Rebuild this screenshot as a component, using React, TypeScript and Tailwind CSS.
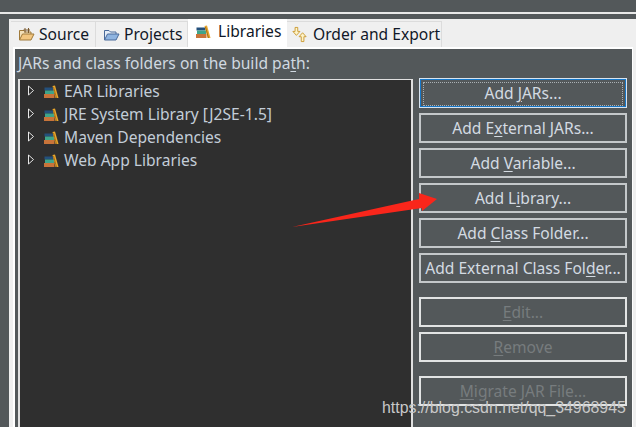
import React from 'react';

const font = { fontFamily: '"Noto Sans", "Open Sans", sans-serif' };

function U({ children }: { children: React.ReactNode }) {
  return <span className="underline underline-offset-2">{children}</span>;
}

function LibIcon() {
  return (
    <svg width="15" height="14" viewBox="0 0 15 14" className="shrink-0">
      <rect x="0.5" y="2.5" width="9" height="3" fill="#24507c" />
      <rect x="1" y="5.5" width="9" height="3.5" fill="#3fa58a" />
      <rect x="0" y="9" width="10.5" height="4" fill="#c8743a" />
      <path d="M8.5 1 L11 0.5 L14.5 13 L11.5 13 Z" fill="#e8a62c" />
      <path d="M9.5 2 L12.5 13" stroke="#8a5a10" strokeWidth="0.7" />
    </svg>
  );
}

function FolderIcon({ blue }: { blue?: boolean }) {
  const back = blue ? '#e4ecf6' : '#f3e0b8';
  const front = blue ? '#8fb4e0' : '#f2c680';
  const line = blue ? '#4a6a9a' : '#a07a3a';
  return (
    <svg width="17" height="15" viewBox="0 0 17 15" className="shrink-0">
      <path d="M1.5 13 V3.5 H6 L7.5 5 H13 V7" fill={back} stroke={line} />
      <path d="M1.5 13 L4.5 7 H16 L13 13 Z" fill={front} stroke={line} strokeLinejoin="round" />
      {!blue && <path d="M7 1 V6 M10.5 1 V6 M5.5 3 H12" stroke="#7a5a30" strokeWidth="1" />}
    </svg>
  );
}

function OrderIcon() {
  return (
    <svg width="15" height="17" viewBox="0 0 17 19" className="ml-[-2px] mr-[2px] shrink-0">
      <path d="M3.5 1.5 H6.5 V6 H9 L5 10.5 L1 6 H3.5 Z" fill="#fdf3c8" stroke="#c8952a" />
      <path d="M10.5 17.5 H13.5 V12 H16 L12 7.5 L8 12 H10.5 Z" fill="#fdf3c8" stroke="#c8952a" />
    </svg>
  );
}

function Tab({ icon, label, width, active }: { icon: React.ReactNode; label: string; width: string; active?: boolean }) {
  return (
    <div
      className={`flex items-center text-[15.6px] text-[#101828] ${width} ${
        active
          ? 'h-[28px] gap-[7px] bg-white pb-[2px] pl-[8px]'
          : 'h-[26px] gap-[4px] border-t border-r border-[#dcdcdc] bg-[#f0f0f0] pl-[7px]'
      }`}
    >
      {icon}
      <span>{label}</span>
    </div>
  );
}

function Row({ label }: { label: string }) {
  return (
    <div className="flex h-[23px] items-center">
      <svg width="8" height="11" viewBox="0 0 8 11" className="ml-[7px] mr-[9px] mb-[3px] shrink-0">
        <path d="M1.5 1 L6.5 5.5 L1.5 10 Z" fill="#2b2b2b" stroke="#e8e8e8" />
      </svg>
      <LibIcon />
      <span className="ml-[5px] text-[15.6px] text-[#c3cdd8]">{label}</span>
    </div>
  );
}

function Btn({ children, focus, off }: { children: React.ReactNode; focus?: boolean; off?: boolean }) {
  return (
    <div
      className={`flex h-[30px] items-center justify-center border-2 pt-[1px] text-[15.6px] whitespace-nowrap ${
        focus ? 'border-[#d8e4f0] outline outline-1 outline-offset-[-2px] outline-[#1677c8]' : 'border-[#c4c8ca]'
      } ${off ? 'border-[#e2e4e4] text-[#777c7e]' : 'text-[#d4dbe2]'}`}
    >
      {focus ? (
        <span className="flex h-[24px] w-[200px] items-center justify-center border border-dotted border-[#aab0b4]">
          {children}
        </span>
      ) : (
        children
      )}
    </div>
  );
}

export default function App() {
  return (
    <div className="relative h-[427px] w-[636px] overflow-hidden bg-[#53585a]" style={font}>
      <div className="mt-[12px] h-[2px] bg-[#e8e8e8]" />
      <div className="ml-[9px] mt-[5px] h-[408px] bg-[#efefef] pl-[2px]">
        <div className="flex h-[28px] items-end">
          <Tab icon={<FolderIcon />} label="Source" width="w-[85px]" />
          <Tab icon={<FolderIcon blue />} label="Projects" width="w-[92px]" />
          <Tab icon={<LibIcon />} label="Libraries" width="w-[99px]" active />
          <Tab icon={<OrderIcon />} label="Order and Export" width="w-[155px]" />
        </div>
        <div className="ml-[2px] mr-[3px] h-[380px] border-l-2 border-t-2 border-r border-white bg-[#53585a] pl-[3px]">
          <div className="flex h-[29px] items-center pt-[1px] text-[15.6px] text-[#d0d8e0]">
            <span>
              JARs and class folders on the build pa<U>t</U>h:
            </span>
          </div>
          <div className="flex">
            <div className="mt-[1px] h-[360px] w-[395px] border-l-2 border-t border-r-2 border-[#e0e0e0] bg-[#2f2f2f]">
              <Row label="EAR Libraries" />
              <Row label="JRE System Library [J2SE-1.5]" />
              <Row label="Maven Dependencies" />
              <Row label="Web App Libraries" />
            </div>
            <div className="ml-[6px] flex w-[208px] flex-col">
              <div className="flex flex-col gap-[5px]">
                <Btn focus>
                  <span>
                    Add <U>J</U>ARs...
                  </span>
                </Btn>
                <Btn>
                  <span>
                    Add E<U>x</U>ternal JARs...
                  </span>
                </Btn>
                <Btn>
                  <span>
                    Add <U>V</U>ariable...
                  </span>
                </Btn>
                <Btn>
                  <span>
                    Add L<U>i</U>brary...
                  </span>
                </Btn>
                <Btn>
                  <span>
                    Add <U>C</U>lass Folder...
                  </span>
                </Btn>
                <Btn>
                  <span>
                    Add External Class Fol<U>d</U>er...
                  </span>
                </Btn>
              </div>
              <div className="mt-[14px] flex flex-col gap-[5px]">
                <Btn off>
                  <span>
                    <U>E</U>dit...
                  </span>
                </Btn>
                <Btn off>
                  <span>
                    <U>R</U>emove
                  </span>
                </Btn>
              </div>
              <div className="mt-[14px]">
                <Btn off>
                  <span>
                    <U>M</U>igrate JAR File...
                  </span>
                </Btn>
              </div>
            </div>
          </div>
        </div>
      </div>

      {/* red arrow drawn over the shot */}
      <svg width="150" height="50" viewBox="0 0 150 50" className="absolute left-[290px] top-[190px]">
        <path d="M2 37 L129 9 L129 3 L147 9 L132 21 L132 18 Z" fill="#f9261b" />
      </svg>

      {/* watermark */}
      <div
        className="absolute left-[382px] top-[396px] text-[15.9px] text-[#c8c8c8]"
        style={{ fontFamily: '"Liberation Sans", sans-serif' }}
      >
        https://blog.csdn.net/qq_34968945
      </div>
    </div>
  );
}
